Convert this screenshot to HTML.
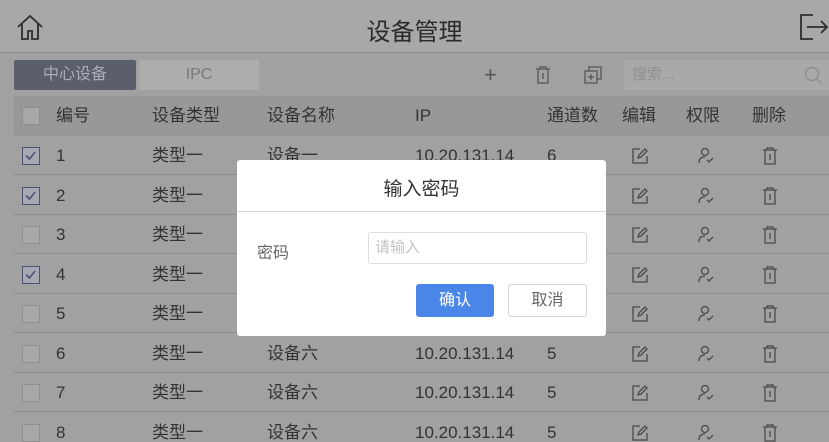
<!DOCTYPE html>
<html><head><meta charset="utf-8"><style>
*{margin:0;padding:0;box-sizing:border-box}
html,body{width:829px;height:442px;overflow:hidden}
body{background:#a1a1a1;font-family:"Liberation Sans","Noto Sans CJK SC",sans-serif;color:#2e2e2e;position:relative}
.a{position:absolute}
.hdr{left:0;top:0;width:829px;height:53px;background:#a8a8a8;border-bottom:1px solid #8e8e8e}
.title{left:0;width:829px;top:12px;text-align:center;font-size:24px;color:#2a2a2a}
.tab1{left:14px;top:60px;width:122px;height:30px;background:#5b5f6b;color:#a9adb8;font-size:16px;text-align:center;line-height:30px;border-radius:2px}
.tab2{left:139px;top:60px;width:120px;height:30px;background:#adadad;color:#777;font-size:16px;text-align:center;line-height:30px;border-radius:2px}
.search{left:624px;top:60px;width:205px;height:30px;background:#a9a9a9;color:#8f8f8f;font-size:15px;line-height:30px;padding-left:8px}
.th{left:14px;top:96px;width:815px;height:40px;background:#989898}
.row{left:14px;width:815px;height:39px;border-bottom:1px solid #8d8d8d}
.t{position:absolute;font-size:17px;line-height:20px;color:#333}
.cb{position:absolute;left:22px;width:18px;height:18px;background:#a8a8a8;border:1px solid #909090}
.cb.on{border:1.5px solid #4c5270;background:#a6a8b3}
.dlg{left:237px;top:160px;width:369px;height:176px;background:#fff;border-radius:3px}
</style></head><body>
<div class="a hdr"></div>
<svg class="a" style="left:16px;top:13px" width="28" height="28" viewBox="0 0 28 28" fill="none" stroke="#2e2e2e" stroke-width="1.8"><path d="M2 14 L14 3 L26 14 M6 11 V26 H12 V18 H16 V26 H22 V11"/></svg>
<div class="a title">设备管理</div>
<svg class="a" style="left:799px;top:13px" width="30" height="28" viewBox="0 0 30 28" fill="none" stroke="#2e2e2e" stroke-width="1.8"><path d="M14 2 H2 V26 H14 M8 14 H28 M22 8 L28 14 L22 20"/></svg>
<div class="a tab1">中心设备</div>
<div class="a tab2">IPC</div>
<div class="a" style="left:484px;top:62px;font-size:22px;color:#555">+</div>
<svg class="a" style="left:535px;top:66px" width="16" height="18" viewBox="0 0 16 18" fill="none" stroke="#555" stroke-width="1.3"><path d="M1 3H15M5 3V1H11V3M3 3V17H13V3M8 7V13"/></svg>
<svg class="a" style="left:584px;top:66px" width="18" height="18" viewBox="0 0 18 18" fill="none" stroke="#555" stroke-width="1.3"><path d="M5 5V1H17V13H13M1 5H13V17H1Z M7 8V14M4 11H10"/></svg>
<div class="a search">搜索...</div>
<svg class="a" style="left:804px;top:66px" width="18" height="18" viewBox="0 0 18 18" fill="none" stroke="#8e8e8e" stroke-width="1.5"><circle cx="8" cy="8" r="6.5"/><path d="M13 13L17 17"/></svg>
<div class="a th"></div>
<div class="cb" style="top:107px"></div>
<div class="t" style="left:56px;top:106px">编号</div>
<div class="t" style="left:152px;top:106px">设备类型</div>
<div class="t" style="left:267px;top:106px">设备名称</div>
<div class="t" style="left:415px;top:106px">IP</div>
<div class="t" style="left:547px;top:106px">通道数</div>
<div class="t" style="left:622px;top:106px">编辑</div>
<div class="t" style="left:686px;top:106px">权限</div>
<div class="t" style="left:752px;top:106px">删除</div>

<div id="rows"></div>
<script>
var ys=[136,175.5,215,254.5,294,333.5,373,412.5],on=[1,1,0,1,0,0,0,0],h='';
var names=['设备一','','','','','设备六','设备六','设备六'],ch=['6','','','','','5','5','5'];
for(var i=0;i<8;i++){var y=ys[i];
h+='<div class="a row" style="top:'+y+'px"></div>';
h+='<div class="cb'+(on[i]?' on':'')+'" style="top:'+(y+11)+'px">'+(on[i]?'<svg width="15" height="15" viewBox="0 0 15 15" style="position:absolute;left:0;top:0" fill="none" stroke="#4c5270" stroke-width="1.6"><path d="M3 7.5L6.5 11L12 4"/></svg>':'')+'</div>';
h+='<div class="t" style="left:56px;top:'+(y+10)+'px">'+(i+1)+'</div>';
h+='<div class="t" style="left:152px;top:'+(y+10)+'px">类型一</div>';
h+='<div class="t" style="left:267px;top:'+(y+10)+'px">'+names[i]+'</div>';
h+='<div class="t" style="left:415px;top:'+(y+10)+'px">'+(names[i]?'10.20.131.14':'')+'</div>';
h+='<div class="t" style="left:547px;top:'+(y+10)+'px">'+ch[i]+'</div>';
h+='<svg class="a" style="left:631px;top:'+(y+11)+'px" width="18" height="18" viewBox="0 0 18 18" fill="none" stroke="#4a4a4a" stroke-width="1.3"><path d="M9 2H2V16H16V9M7 11L8 8L14 2L16 4L10 10Z"/></svg>';
h+='<svg class="a" style="left:697px;top:'+(y+11)+'px" width="18" height="18" viewBox="0 0 18 18" fill="none" stroke="#4a4a4a" stroke-width="1.3"><circle cx="8" cy="5" r="3.5"/><path d="M2 16C2 12 4 10 8 10M10 13L12 15L16 11"/></svg>';
h+='<svg class="a" style="left:762px;top:'+(y+11)+'px" width="16" height="18" viewBox="0 0 16 18" fill="none" stroke="#4a4a4a" stroke-width="1.3"><path d="M1 3H15M5 3V1H11V3M3 3V17H13V3M8 7V13"/></svg>';
}
document.getElementById('rows').innerHTML=h;
</script>

<div class="a dlg">
<div class="a" style="left:0;top:14px;width:369px;text-align:center;font-size:19px;color:#333">输入密码</div>
<div class="a" style="left:0;top:51px;width:369px;height:1px;background:#d8d8d8"></div>
<div class="a" style="left:20px;top:79px;font-size:16px;color:#666">密码</div>
<div class="a" style="left:131px;top:72px;width:219px;height:32px;border:1px solid #ddd;border-radius:3px;font-size:15px;color:#c4c4c4;line-height:30px;padding-left:6px">请输入</div>
<div class="a" style="left:179px;top:124px;width:78px;height:33px;background:#4a86e8;border-radius:3px;color:#fff;font-size:16px;text-align:center;line-height:33px">确认</div>
<div class="a" style="left:271px;top:124px;width:79px;height:33px;border:1px solid #d4d4d4;border-radius:3px;color:#666;font-size:16px;text-align:center;line-height:31px">取消</div>
</div>
</body></html>
